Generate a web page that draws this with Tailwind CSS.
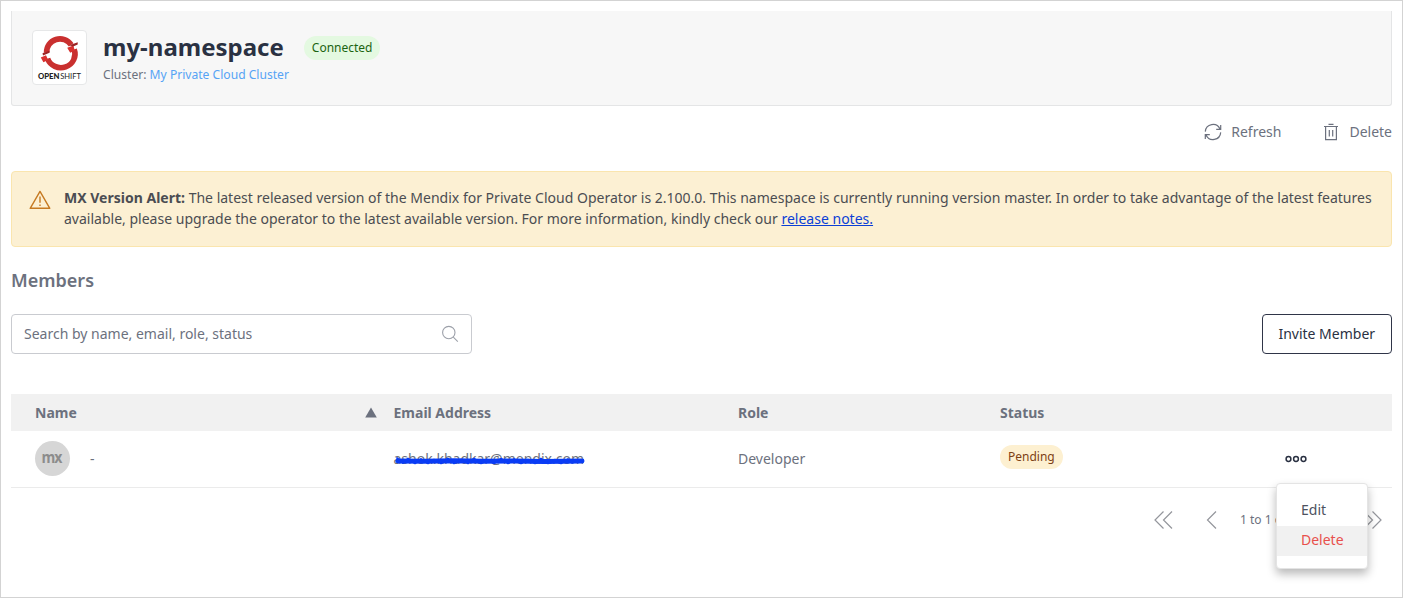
<!DOCTYPE html>
<html lang="en">
<head>
<meta charset="utf-8">
<title>my-namespace</title>
<script src="https://cdn.jsdelivr.net/npm/@tailwindcss/browser@4"></script>
</head>
<body class="bg-white font-['Noto_Sans',sans-serif] text-[#6c717e]">
<div class="relative flex h-[598px] w-[1403px] flex-col overflow-hidden border border-[#d3d3d3] px-2.5 pt-2.5 text-[14px] leading-[21px] whitespace-nowrap">

  <header class="flex h-[95px] shrink-0 items-start rounded-b-[3px] border border-t-0 border-[#e4e5e6] bg-[#f7f7f7] pt-[19px] pl-5">
    <div class="h-[55px] w-[55px] shrink-0 rounded-[4px] border border-[#e6e7e8] bg-white">
      <svg class="block" width="53" height="53" viewBox="0 0 53 53">
        <g fill="none" stroke="#c9302f" stroke-width="5.6">
          <path d="M13.6 21.6A13.4 13.3 0 0 1 38.2 13.9"/>
          <path d="M41.2 18.4A14 13.6 0 0 1 14.6 27.6"/>
        </g>
        <path fill="#d8312f" d="M34.2 16.8l6.200-2.200 1.300 5-4.500 2.200zM7.800 26.400l5.200-2.200 2.200 4.800-4.800 2.200z"/>
        <path fill="#9c2324" d="M36.500 14.200l8.200-3v2.400l-4.500 2zM9.500 22.200l7-2.400v2l-6.500 2.600z"/>
        <g font-family="Lato, sans-serif" font-size="6.600" fill="#222">
          <text x="5" y="47.600" font-weight="900" textLength="21.500" lengthAdjust="spacingAndGlyphs">OPEN</text>
          <text x="27.200" y="47.600" textLength="20.800" lengthAdjust="spacingAndGlyphs">SHIFT</text>
        </g>
      </svg>
    </div>
    <div class="ml-4">
      <div class="flex h-[35px] items-center">
        <h1 class="-mt-0.5 text-[24px] font-bold text-[#2a3142]">my-namespace</h1>
        <span class="ml-5 flex h-6 items-center rounded-full bg-[#e4f9e1] px-2 text-[12px] text-[#1c6411]">Connected</span>
      </div>
      <p class="mt-px text-[12.1px] leading-[18px]">Cluster: <a class="text-[#56a3f5]">My Private Cloud Cluster</a></p>
    </div>
  </header>

  <div class="mt-[15px] flex h-[21px] shrink-0 items-center justify-end">
    <svg width="18" height="18" viewBox="0 0 18 18" fill="none" stroke="#6c717e" stroke-width="1.2"><path d="M1.3 8.6A7.7 7.7 0 0 1 16 6M16.7 1.9v4.4h-4.5M16.7 9.4A7.7 7.7 0 0 1 2 12M1.3 16.1v-4.4h4.5"/></svg>
    <span class="ml-[9px]">Refresh</span>
    <svg class="ml-[42px]" width="16" height="18" viewBox="0 0 16 18" fill="none" stroke="#6c717e" stroke-width="1.2"><path d="M1 3.5h14M5.5 1.3h5M2.6 3.5v13.2h10.8V3.5M6.3 7v6.5M9.7 7v6.5"/></svg>
    <span class="ml-2.5">Delete</span>
  </div>

  <section class="mt-[29px] flex h-[76px] shrink-0 rounded-[4px] border border-[#fae5ae] bg-[#fcf0d3] pt-[15px] pl-[17px] text-[#4b4d52]">
    <svg class="mt-0.5" width="22" height="22" viewBox="0 0 22 22" fill="none" stroke="#c67a22" stroke-width="1.4" stroke-linejoin="round"><path d="M11 2.4L1.2 19.3h19.6z"/><path d="M11 7.6v6.2M11 15.4v1.6"/></svg>
    <p class="ml-[13px] text-[14.02px]"><b>MX Version Alert:</b> The latest released version of the Mendix for Private Cloud Operator is 2.100.0. This namespace is currently running version master. In order to take advantage of the latest features<br>available, please upgrade the operator to the latest available version. For more information, kindly check our <a class="text-[#0b3fd6] underline">release notes.</a></p>
  </section>

  <h2 class="mt-[21px] h-6 shrink-0 text-[18px] leading-6 font-semibold">Members</h2>

  <div class="mt-[22px] flex h-10 shrink-0 justify-between">
    <div class="flex w-[460.5px] items-center justify-between rounded-[4px] border border-[#c9cbd0] pr-3 pl-3">
      <span class="-mt-0.5">Search by name, email, role, status</span>
      <svg width="18" height="18" viewBox="0 0 18 18" fill="none" stroke="#9ca0a9" stroke-width="1.1"><circle cx="7.8" cy="7.6" r="6.2"/><path d="M12.3 12.1l4.5 4.5"/></svg>
    </div>
    <button class="w-[130.5px] rounded-[4px] border border-[#2f3548] pb-0.5 text-[#2a3142]">Invite Member</button>
  </div>

  <div class="mt-[39.5px] grid h-[37px] shrink-0 grid-cols-[358.5px_344.5px_262px_1fr] items-center bg-[#f1f1f1] pl-6 font-bold">
    <div class="flex items-center justify-between pr-[17px]">Name<svg width="12" height="11" viewBox="0 0 12 11"><path d="M6 .5l5.8 10H.2z" fill="#6c717e"/></svg></div>
    <div>Email Address</div><div>Role</div><div>Status</div>
  </div>
  <div class="grid h-[57px] shrink-0 grid-cols-[358.5px_344.5px_262px_285px_1fr] items-center border-b border-[#ebebeb] pl-6">
    <div class="flex items-center">
      <span class="flex h-[35px] w-[35px] items-center justify-center rounded-full bg-[#d6d6d6]">
        <span class="-mt-0.5 -ml-0.5 scale-x-[0.88] font-['Open_Sans',sans-serif] text-[16px] font-bold tracking-[-1px] text-[#8c8c8c]">mx</span>
      </span>
      <span class="ml-5">-</span>
    </div>
    <div class="relative -mt-px w-fit">ashok.khadkar@mendix.com
      <svg class="absolute top-[7px] left-0" width="192" height="11" viewBox="0 0 192 11" fill="none" stroke="#0a3cf5" stroke-linejoin="round" stroke-linecap="round"><path stroke-width="5" d="M4 5.900L30 6.300L60 5.800L90 6.300L120 5.900L150 6.500L188 6"/><path stroke-width="1.7" d="M3 3l6 5 5-4.500 7 5 6-4.600 7 4.600 6-4 7 4 7-5 6 5 7-4 7 4 6-5 7 5 6-4 7 4 7-5 7 5 6-4.500 7 4.500 7-4 7 4 6-5 7 5 7-4 6 4 7-4.500 4 4"/></svg>
    </div>
    <div class="-mt-px">Developer</div>
    <div><span class="mb-1 flex h-6 w-fit items-center rounded-full bg-[#fdf0d1] px-2 text-[12px] text-[#7d4114]">Pending</span></div>
    <svg class="mt-px" width="22" height="8" viewBox="0 0 22 8" fill="none" stroke="#2a3142" stroke-width="1.5"><circle cx="3.5" cy="4" r="2.4"/><circle cx="11" cy="4" r="2.4"/><circle cx="18.5" cy="4" r="2.4"/></svg>
  </div>

  <div class="mt-[22px] flex h-5 shrink-0 items-center justify-end pr-2.5 text-[12px]">
    <svg width="19" height="18" viewBox="0 0 19 18" fill="none" stroke="#94969c" stroke-width="1.2"><path d="M9.5 .5L1 9l8.5 8.5M18 .5L9.5 9l8.5 8.5"/></svg>
    <svg class="ml-[33px]" width="11" height="18" viewBox="0 0 11 18" fill="none" stroke="#94969c" stroke-width="1.2"><path d="M10 .5L1.5 9l8.5 8.5"/></svg>
    <span class="ml-[23px] w-[57px]">1 to 1 of 1</span>
    <svg class="ml-[22px]" width="11" height="18" viewBox="0 0 11 18" fill="none" stroke="#94969c" stroke-width="1.2"><path d="M1 .5L9.5 9L1 17.5"/></svg>
    <svg class="ml-[33px]" width="19" height="18" viewBox="0 0 19 18" fill="none" stroke="#94969c" stroke-width="1.2"><path d="M1 .5L9.5 9L1 17.5M9.5 .5L18 9l-8.5 8.5"/></svg>
  </div>

  <div class="absolute top-[482px] left-[1275px] h-[86px] w-[92px] rounded-[4px] border border-[#e4e4e4] bg-white pt-[11.5px] text-[#4d5260] shadow-[0_5px_10px_rgba(0,0,0,0.28)]">
    <div class="flex h-[30px] items-center pb-0.5 pl-6">Edit</div>
    <div class="flex h-[30px] items-center bg-[#f1f1f1] pb-0.5 pl-6 text-[#e8504c]">Delete</div>
  </div>
</div>
</body>
</html>
